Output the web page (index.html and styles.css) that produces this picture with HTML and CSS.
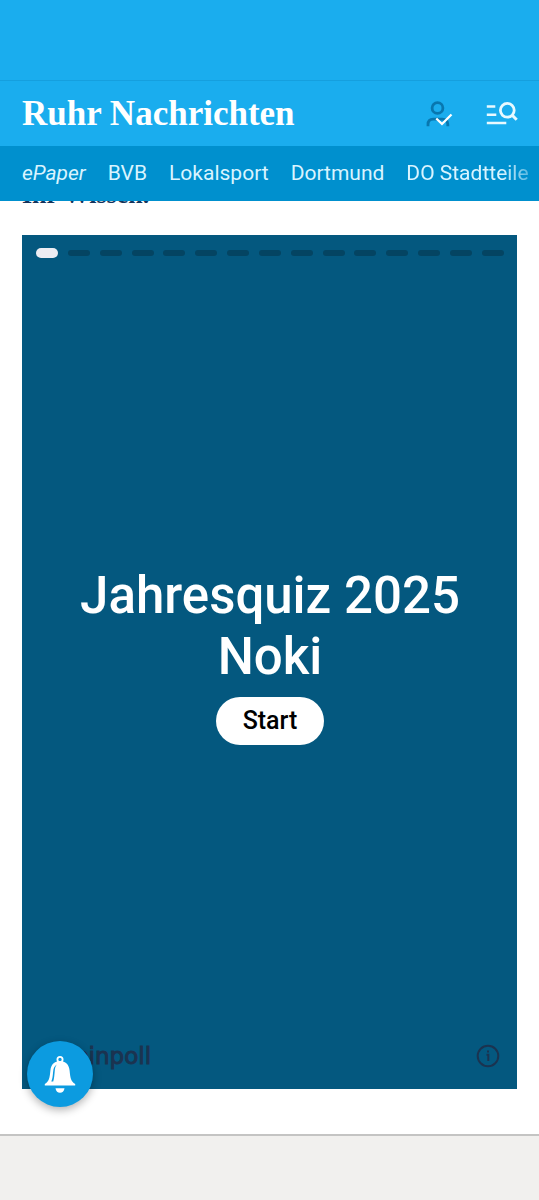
FILE: index.html
```html
<!DOCTYPE html>
<html lang="de">
<head>
<meta charset="utf-8">
<meta name="viewport" content="width=device-width, initial-scale=1">
<title>Ruhr Nachrichten</title>
<link rel="stylesheet" href="styles.css">
</head>
<body>
<header class="header">
  <div class="status"></div>
  <div class="brand-bar">
    <a class="brand" href="#">Ruhr Nachrichten</a>
    <div class="actions">
      <button class="icon-button" type="button" aria-label="Konto">
        <svg width="28" height="28" viewBox="0 0 28 28" fill="none">
          <circle cx="11.500" cy="8" r="5.400" stroke="#0877af" stroke-width="2.800"/>
          <path d="M2 26.300V24.500q0-5.300 5.300-5.300h9q5 0 5.500 5v2.100" stroke="#0877af" stroke-width="2.800"/>
          <path d="M10.300 18.500l5.700 5.500 9.500-9.500" stroke="#fff" stroke-width="2.300"/>
        </svg>
      </button>
      <button class="icon-button" type="button" aria-label="Menü und Suche">
        <svg width="32" height="28" viewBox="0 0 32 28" fill="none" stroke="#e8f9ff">
          <path d="M.8 6.500h8.500M.8 14.700h9.500M.8 23h19.500" stroke-width="2.600"/>
          <circle cx="21.300" cy="10.300" r="6.900" stroke-width="2.800"/>
          <path d="M26 15l4.700 4.800" stroke-width="3"/>
        </svg>
      </button>
    </div>
  </div>
  <nav class="nav">
    <a class="nav-link nav-link-epaper" href="#">ePaper</a>
    <a class="nav-link" href="#">BVB</a>
    <a class="nav-link" href="#">Lokalsport</a>
    <a class="nav-link" href="#">Dortmund</a>
    <a class="nav-link" href="#">DO Stadtteile</a>
  </nav>
</header>
<main class="content">
  <h2 class="teaser">Ihr Wissen.</h2>
  <section class="quiz">
    <div class="progress">
      <span class="step step-active"></span><span class="step"></span><span class="step"></span><span class="step"></span><span class="step"></span><span class="step"></span><span class="step"></span><span class="step"></span><span class="step"></span><span class="step"></span><span class="step"></span><span class="step"></span><span class="step"></span><span class="step"></span><span class="step"></span>
    </div>
    <div class="intro">
      <h1 class="title">Jahresquiz 2025 Noki</h1>
      <button class="start" type="button">Start</button>
    </div>
    <div class="quiz-footer">
      <a class="provider" href="#"><span class="provider-mark"></span>pinpoll</a>
      <button class="icon-button" type="button" aria-label="Information">
        <svg width="24" height="24" viewBox="0 0 24 24" fill="none" stroke="#1b3350" stroke-width="2">
          <circle cx="12" cy="12" r="10.300"/>
          <path d="M10.500 10.800H12.300V17M12 6.500v2"/>
        </svg>
      </button>
    </div>
  </section>
</main>
<footer class="bottom-bar"></footer>
<button class="bell" type="button" aria-label="Benachrichtigungen">
  <svg width="32" height="38" viewBox="0 0 32 38">
    <circle cx="16" cy="4.500" r="2.600" fill="none" stroke="#fff" stroke-width="1.800"/>
    <path d="M16 6c5.500 0 9 3.500 9.600 9.500.7 7 1.200 11 5.600 13.500v1.500H.8V29c4.400-2.500 4.900-6.500 5.600-13.500C7 9.500 10.500 6 16 6z" fill="#fff"/>
    <path d="M13 9.500c-2.600 1.300-3.500 3.500-3.900 7.500-.4 4.200-.7 7-1.800 9.500h1.900c1-3 1.200-6.500 1.500-10 .2-3.500.7-5.500 2.300-7z" fill="#0c9be0"/>
    <path d="M11.500 33.200h9c-.4 3-2.200 4.600-4.500 4.600s-4.100-1.600-4.500-4.600z" fill="#fff"/>
  </svg>
</button>
</body>
</html>
```
FILE: styles.css
```css
* {
  box-sizing: border-box;
}

body {
  margin: 0;
  min-height: 100vh;
  display: flex;
  flex-direction: column;
  background: #fff;
  font-family: Roboto, "Liberation Sans", sans-serif;
}

button {
  border: 0;
  padding: 0;
  font-family: inherit;
  cursor: pointer;
}

a {
  color: inherit;
  text-decoration: none;
}

svg {
  display: block;
}

.header {
  position: sticky;
  top: 0;
  z-index: 2;
  color: #fff;
  background: #1aadee;
}

.status {
  height: 81px;
  border-bottom: 1px solid #159fde;
}

.brand-bar {
  display: flex;
  align-items: center;
  justify-content: space-between;
  height: 65px;
  padding: 0 21px 0 22px;
}

.brand {
  font-family: "Liberation Serif", serif;
  font-size: 35px;
  font-weight: 700;
  line-height: 40px;
}

.actions {
  display: flex;
  gap: 32px;
}

.icon-button {
  background: none;
}

.nav {
  display: flex;
  align-items: center;
  gap: 22px;
  height: 55px;
  padding: 0 0 2px 22px;
  overflow: hidden;
  white-space: nowrap;
  background: #0090ce;
}

.nav-link {
  color: #d9f4ff;
  font-size: 21px;
  line-height: 28px;
}

.nav-link-epaper {
  font-style: italic;
}

.nav-link:last-child {
  mask-image: linear-gradient(to right, #000 78%, rgba(0, 0, 0, 0.4));
}

.content {
  flex: 1;
  display: flex;
  flex-direction: column;
  padding: 0 22px 45px;
}

.teaser {
  margin: -21px 0 25px;
  color: #14345c;
  font-family: "Liberation Serif", serif;
  font-size: 26px;
  line-height: 30px;
}

.quiz {
  flex: 1;
  display: flex;
  flex-direction: column;
  padding: 13px 13px 20px 14px;
  background: #04587f;
}

.progress {
  display: flex;
  align-items: center;
  justify-content: space-between;
  height: 10px;
}

.step {
  width: 22px;
  height: 6px;
  border-radius: 3px;
  background: #044462;
}

.step-active {
  height: 10px;
  border-radius: 5px;
  background: #ededf3;
}

.intro {
  flex: 1;
  display: flex;
  flex-direction: column;
  align-items: center;
  justify-content: center;
  gap: 10px;
  padding-top: 8px;
}

.title {
  margin: 0;
  max-width: 400px;
  color: #fff;
  font-size: 51px;
  font-weight: 500;
  line-height: 61px;
  text-align: center;
}

.start {
  min-width: 108px;
  height: 48px;
  border-radius: 24px;
  background: #fff;
  color: #000;
  font-size: 25px;
  font-weight: 500;
}

.quiz-footer {
  display: flex;
  align-items: center;
  justify-content: space-between;
  padding-right: 4px;
}

.provider {
  display: flex;
  align-items: center;
  gap: 8px;
  color: #1b3350;
  font-family: "DejaVu Sans", sans-serif;
  font-size: 23px;
  line-height: 26px;
  -webkit-text-stroke: 1px #1b3350;
}

.provider-mark {
  width: 24px;
  height: 24px;
  margin-left: 6px;
  border-radius: 12px;
  background: #1b3350;
}

.bottom-bar {
  height: 66px;
  border-top: 2px solid #c4c4c3;
  background: #f1f0ee;
}

.bell {
  position: fixed;
  left: 27px;
  bottom: 93px;
  z-index: 3;
  display: flex;
  align-items: center;
  justify-content: center;
  width: 66px;
  height: 66px;
  border-radius: 50%;
  background: #0c9be0;
  box-shadow: 0 3px 8px rgba(0, 0, 0, 0.3);
}
```
